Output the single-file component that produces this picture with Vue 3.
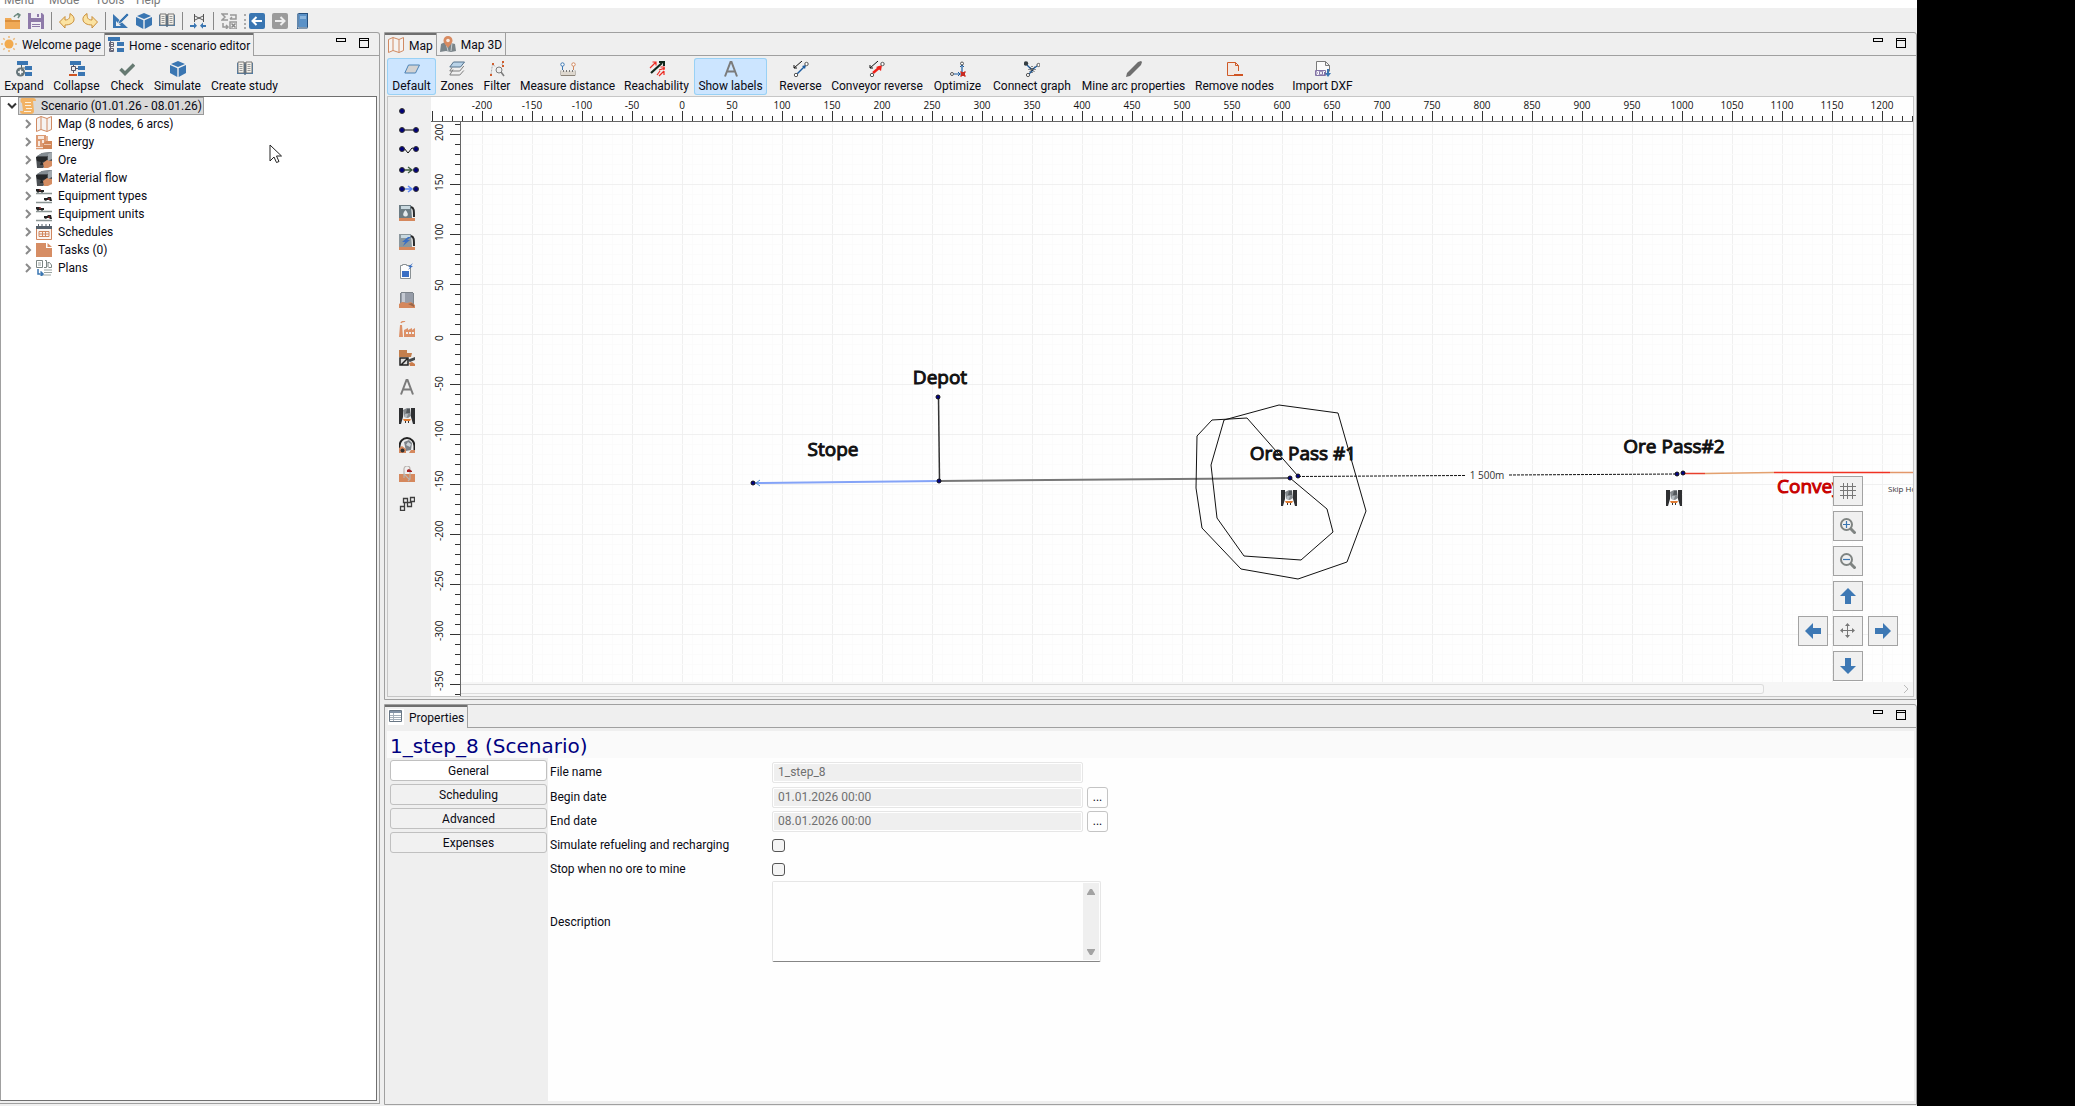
<script setup>
import { ref } from 'vue'

const book = '<path d="M0 2h7l1 1 1-1h7v11H9l-1 1-1-1H0z" fill="#457fb5"/><path d="M1 1h6v11H1zM9 1h6v11H9z" fill="#f4f1ea" stroke="#777"/><path d="M8 1v13" stroke="#666"/><path d="M2.500 3.500h3M2.500 5.500h3M2.500 7.500h3M2.500 9.500h3M10.500 3.500h3M10.500 5.500h3M10.500 7.500h3M10.500 9.500h3" stroke="#999"/>'
const cube = '<path d="M8 0l7 3-7 3-7-3z" fill="#3a76b2"/><path d="M0 4l7.300 3.200V16L0 12zM16 4L8.700 7.200V16l7.300-4z" fill="#3a76b2"/>'
const map = '<path d="M.5 2.500L5 .5l6 2 4.500-2v13L11 15.500l-6-2-4.500 2zM5 .5v13M11 2.500v13" fill="#f6f3f1" stroke="#d08a63"/>'
const oreLump = '<path d="M0 5l6-4 10-1v9L7 16H1z" fill="#4b4f53"/><path d="M6 1l10-1-4 4H1z" fill="#848c92"/><path d="M0 5l11 0v4l-5 1 2 3H4l1-3-4-1z" fill="#26282a"/><path d="M7 11l4-3 5 1v5l-4 2H8z" fill="#d58d62"/><path d="M12 2l4-2v7l-4 2z" fill="#a2a9ae"/>'
const trucks = '<path d="M0 5.500h16M0 14.500h16" stroke="#8b9594" stroke-width="1.500"/><path d="M0 1h4l1 1h3v2H7L6 5 5 4H3L2 5 0 3zM8 10h3l1-1h3l1 4h-2l-1-1h-2l-1 1-2-1z" fill="#222"/><path d="M3 2h2M12 11h2" stroke="#b33"/>'
const shaft = '<path d="M0 0h4v9l-2 7H0zM12 0h4v16h-2l-2-7z" fill="#2e2f31"/><path d="M4 2l4-2h3l1 8-3 2-4-1z" fill="#84898d"/><path d="M8 1h3v4H7z" fill="#54595d"/><path d="M6 6h3l-1 3H5z" fill="#b4bbc0"/><path d="M4 11h8l-1 2H5z" fill="#e07b32"/><path d="M6 13h1v2H6zM9 13h1v2H9z" fill="#333"/>'
const letterA = '<path d="M2 15.500L7.500 1h1L14 15.500M4.500 10.500h7" fill="none" stroke="#7b7b7b" stroke-width="2"/>'
const dots = '<circle cx="3" cy="8" r="2.500" fill="#00007c" stroke="#333"/><circle cx="17" cy="8" r="2.500" fill="#00007c" stroke="#333"/>'

const icons = {
  open: '<path d="M0 5h6l1 2h8v9H0z" fill="#f0aa57"/><path d="M0 7h15v2H0z" fill="#d98f3e"/><path d="M9 4c1-2 3-3 5-2M12 0l3 2-2 3" fill="none" stroke="#6d8a80" stroke-width="1.500"/>',
  save: '<path d="M0 0h14l2 2v14H0z" fill="#8e7aa9"/><path d="M3 0h10v5H3zM3 9h10v7H3z" fill="#efedf3"/><path d="M9 1h2v3H9zM4 11h8v1H4zM4 13h8v1H4z" fill="#8e7aa9"/>',
  undo: '<path d="M.5 9L6 3.500V7c4 0 5-2 5-6.500 3 2 4.500 4 4 6.500-.5 3-4 5-9 5v3z" fill="#fbe3a2" stroke="#c98f3b"/>',
  redo: '<path d="M15.500 9L10 3.500V7C6 7 5 5 5 .5 2 2.500.5 4.500 1 7c.5 3 4 5 9 5v3z" fill="#fbe3a2" stroke="#c98f3b"/>',
  design: '<path d="M0 1l15 14H0zM3 8v5h5z" fill="#3a76b2" fill-rule="evenodd"/><path d="M5 11l1-3 8-8 2 2-8 8z" fill="#3a76b2" stroke="#efefef" stroke-width=".7"/>',
  cube, book,
  arcs: '<path d="M4.500 1v8M13.500 1v8M5 3l8 4M5 7l8-4" stroke="#555" fill="none"/><path d="M0 12h4V9.500l3 3.200-3 3V14H0zM16 12h-3V9.500l-3 3.200 3 3V14h3z" fill="#3a76b2"/>',
  sigma: '<path d="M7 1H1l3 3-3 3h6M9 2h6v4H9M2 10v4h5M5 12l2 2-2 2M11 4L9 6M9 9h7v7H9z" fill="none" stroke="#989898" stroke-width="1.500"/><path d="M10.500 10.500l4 4M14.500 10.500l-4 4" stroke="#888" stroke-width="1.500"/>',
  back: '<rect width="16" height="16" rx="2" fill="#3a76b2"/><path d="M13 8H4M7.500 4L3.500 8l4 4" fill="none" stroke="#fff" stroke-width="2"/>',
  forward: '<rect width="16" height="16" rx="2" fill="#9b9b9b"/><path d="M3 8h9M8.500 4l4 4-4 4" fill="none" stroke="#eee" stroke-width="2"/>',
  manual: '<path d="M2 1l2-1h9v14l-1 2H2z" fill="#27507d"/><path d="M4 1h8v13H4z" fill="#5a91c7"/><path d="M5 3h6v3H5z" fill="#8bb5dd"/><path d="M3 1v14" stroke="#9fc0e0"/><path d="M3 15h9" stroke="#ddd"/>',
  sun: '<circle cx="8" cy="8" r="4.500" fill="#f2aa4e"/><path d="M8 0v2M8 14v2M0 8h2M14 8h2M2.300 2.300l1.400 1.400M12.300 12.300l1.400 1.400M13.700 2.300l-1.400 1.400M3.700 12.300l-1.400 1.400" stroke="#edb877" stroke-width="1.500"/>',
  home: '<path d="M0 0h12v4H0zM9 5h7v4H9zM9 11h7v4H9z" fill="#3a76b2"/><path d="M2.500 4v9.500H6M2.500 7.500H6M1.500 5.500h4v4h-4zM1.500 11.500h4v3h-4z" fill="#efefef" stroke="#667"/>',
  expand: '<path d="M1 0h11v4H1zM9 5h7v4H9zM9 11h7v4H9z" fill="#3a76b2"/><path d="M5.500 4v3H9" fill="none" stroke="#566"/><circle cx="4.500" cy="11" r="4.500" fill="#66757a"/><path d="M4.500 8.500v5M2 11h5" stroke="#fff" stroke-width="1.500"/>',
  collapse: '<path d="M1 0h11v4H1zM9 5h7v4H9zM9 11h7v4H9z" fill="#3a76b2"/><path d="M2.500 5.500h4v4h-4zM4.500 4v2M6.500 7.500H9M4.500 9v3" fill="none" stroke="#556"/><path d="M0 13h8v2H0z" fill="#cf5423"/>',
  check: '<path d="M1.500 8L6 12.500 15 3.500" fill="none" stroke="#667a72" stroke-width="3.500"/>',
  map,
  map3d: '<path d="M1 8l4-2 6 1 4 1 1 7-5 1-5-1-6 1z" fill="#7b858a"/><path d="M6 7l2 8M12 7l-1 8" stroke="#c9cfd2"/><path d="M8 12C5 8 3.500 6.500 3.500 4.500a4.500 4.500 0 019 0C12.500 6.500 11 8 8 12z" fill="#d88a60"/><circle cx="8" cy="4.500" r="1.800" fill="#f4ece7"/>',
  table: '<path d="M.5.500h12v11H.5z" fill="#fff" stroke="#687684"/><path d="M1 1h11v2H1z" fill="#8292a5"/><path d="M4.500 3v8M1 5.500h11M1 7.500h11M1 9.500h11" stroke="#a6b0ba"/>',
  plane: '<path d="M4.500 4h11l-4 8H.8z" fill="#d2d2d2" stroke="#4c83b5"/>',
  zones: '<path d="M4 8.500L.8 14h10l4-4.500M3 6.500L.8 10h10l4-5" fill="none" stroke="#7d7d7d"/><path d="M4.500 1h11l-4 5H.8z" fill="#b9d3e8" stroke="#54728c"/>',
  filter: '<path d="M2 13.500L3.500 3l3 3M13 4l1-3" fill="none" stroke="#aaa" stroke-dasharray="2 1"/><circle cx="10" cy="9" r="3" fill="none" stroke="#7c7c7c"/><path d="M12 11l3 4" stroke="#7c7c7c" stroke-width="1.500"/><path d="M3 2h2v2H3zM13 0h2v2h-2zM13 4h2v2h-2zM1 13h2v2H1z" fill="#cf5d2e"/>',
  measure: '<path d="M1 14.500h14V9.500M1 14.500V9.500" fill="none" stroke="#8b8378"/><path d="M1 10h14v4H1z" fill="#ddd7ce"/><path d="M3.500 9v2M6.500 9v2M9.500 9v2M12.500 9v2" stroke="#777"/><path d="M2.500 9V4" stroke="#3a76b2"/><circle cx="2.500" cy="3.500" r="1.700" fill="#fff" stroke="#3a76b2"/><path d="M13.500 9V4" stroke="#d0875d"/><circle cx="13.500" cy="3.500" r="1.700" fill="#fff" stroke="#d0875d"/>',
  reach: '<path d="M1 7l6-6M3.500 1H7v3.500M8 14l3-4M10 9l6-2M10 15l5-5M11.500 6H15v3M15 10v4" fill="none" stroke="#ec2b22" stroke-width="1.200"/><path d="M2 12L13 2M10 1h5v4" fill="none" stroke="#10261a" stroke-width="2.200"/>',
  letterA,
  reverse: '<path d="M1 7l8-7M1 4v3h3" fill="none" stroke="#111"/><path d="M4 13l8-8" stroke="#1c5ca0" stroke-width="1.500"/><path d="M13 4l-1 4-3-3z" fill="#1c5ca0"/><circle cx="3" cy="14" r="1.700" fill="#fff" stroke="#555"/><circle cx="13.500" cy="3" r="1.700" fill="#fff" stroke="#555"/>',
  conveyor: '<path d="M1 7l8-7M1 4v3h3" fill="none" stroke="#111"/><path d="M4 12l7-6" stroke="#ef2019" stroke-width="2.500"/><path d="M13 4l-1 6-5-4z" fill="#ef2019"/><circle cx="3" cy="14" r="1.700" fill="#fff" stroke="#555"/><circle cx="13.500" cy="3" r="1.700" fill="#fff" stroke="#555"/>',
  optimize: '<path d="M4 13h7M12 4v8" stroke="#1c5ca0" stroke-width="1.200"/><path d="M10 6l2-2 2 2M8 11l2 2-2 2" fill="none" stroke="#1c5ca0"/><path d="M10.500 10.500l5 5M15.500 10.500l-5 5" stroke="#c92b22" stroke-width="1.500"/><path d="M11 11h4v4h-4z" fill="#c92b22"/><circle cx="2" cy="13" r="1.500" fill="#fff" stroke="#555"/><circle cx="12" cy="2.500" r="1.500" fill="#fff" stroke="#555"/>',
  graph: '<path d="M3 4l4 4M13 5L9 8M9 9l-4 4" stroke="#1c5ca0" stroke-width="1.300"/><path d="M8 5v7M4.500 8.500h7M5.500 6l5 5M10.500 6l-5 5" stroke="#222" stroke-dasharray="1 1"/><circle cx="2" cy="2.500" r="2.200" fill="#343d42"/><circle cx="14.500" cy="4" r="1.600" fill="#fff" stroke="#555"/><circle cx="4" cy="14" r="1.600" fill="#fff" stroke="#555"/>',
  pencil: '<path d="M0 16l1-4L12 1l3-1 1 1-1 3L4 15z" fill="#6f6f6f"/>',
  remove: '<path d="M11.500 10V4.500L8.500 1.500h-8v13h7M8.500 1.500v3h3" fill="#f2e9e4" stroke="#cf5a27"/><path d="M7 13h9v2H7z" fill="#cf5423"/>',
  dxf: '<path d="M1.500 9V.5h9l4 4v6M10.500.5v4h4" fill="#fbfbfb" stroke="#7a7a7a"/><rect y="9" width="11" height="6" rx="1" fill="#8272a5"/><path d="M2 10.500h1.500v3H2zM5 10.500l2 3M7 10.500l-2 3M8.500 13.500v-3H10" fill="none" stroke="#fff"/><path d="M12 8h2v4h2l-3 4-3-4h2z" fill="#3a76b2"/>',
  scroll: '<path d="M2 0h11c2 0 3 1 3 3h-3l1 10c0 2-1 3-3 3H3c-2 0-3-1-3-3h3L2 5C0 5 0 0 2 0z" fill="#f2b263"/><path d="M5 4.500h6M5 7.500h6M6 10.500h6M4 13.500h7" stroke="#fdf1dc"/>',
  energy: '<path d="M0 1h10v12H0z" fill="#dc9a73"/><path d="M2 2h6v3H2zM2 7h2v5H2zM6 6h2v3H6z" fill="#f7e9e0"/><path d="M11 2v7M0 14.500h8" stroke="#dc9a73" stroke-width="1.500"/><path d="M7 10l3-3h6v8H7z" fill="#d18657"/><path d="M8 10h7v1H8z" fill="#efc5ad"/>',
  oreLump, trucks,
  calendar: '<path d="M.5 4.500h15v11H.5z" fill="#faf5f2" stroke="#d0865e"/><path d="M0 2h16v3H0z" fill="#55606a"/><path d="M2.500 0v3M6 0v3M10 0v3M13.500 0v3" stroke="#55606a"/><path d="M3 7.500h10v5H3zM6.500 7.500v5M9.500 7.500v5M3 10h10" fill="none" stroke="#d0865e"/>',
  task: '<path d="M0 1h10v5h6v9H0zM11.500 1L16 5h-4.500z" fill="#d68d64"/>',
  plans: '<path d="M.5.500h6v7h-6zM9 .5h1.500v7H8M12 2v5M12 2.500h1.500l2 2.500v2.500h-3" fill="none" stroke="#7b8583"/><path d="M2 3h3M2 5h3M8 10h8M8 12.500h8M6 15h9" stroke="#9aa4a1"/><path d="M2 9v5h4M4.500 11.500L7 14l-2.500 2.500" fill="none" stroke="#3a76b2" stroke-width="1.500"/>',
  pump: '<path d="M0 0h12l1 13H0z" fill="#6c7c84"/><path d="M2 1h9v3H2z" fill="#c8d8df"/><path d="M6.500 5c4 4.500 2 6.500 0 6.500s-4-2 0-6.500z" fill="#e4ebee"/><path d="M12 2c3 1 3 3 3 10" fill="none" stroke="#26282a" stroke-width="2"/><path d="M0 13h16v3H0z" fill="#d5885d"/>',
  charge: '<path d="M0 0h12l1 13H0z" fill="#8b979d"/><path d="M2 1h9v3H2z" fill="#c8d8df"/><path d="M9 3L3 8h3l-2 4 7-6H8l4-3z" fill="#3a6fc4"/><path d="M12 2c3 1 3 3 3 10" fill="none" stroke="#26282a" stroke-width="2"/><path d="M0 13h16v3H0z" fill="#d5885d"/>',
  battery: '<path d="M1.500 2.500h2v-1h4v1h4v13h-10z" fill="#fdfdfd" stroke="#8a9194"/><path d="M3 8h7v6H3z" fill="#3a6fc4"/><path d="M14 0L9 4h2l-2 3 5-4h-2z" fill="#3a6fc4"/>',
  tank: '<path d="M2 0h12v12H2z" fill="#969ca8"/><path d="M3 1h3v9H3z" fill="#c4c9d2"/><path d="M1.500 1v12M14.500 1v12M2 .5h12" stroke="#7c838a"/><path d="M0 16v-4l3-2 5 1 4-1 4 3v3z" fill="#d5885d"/><path d="M9 12l4-1 2 2v2z" fill="#9a6648"/>',
  factory: '<path d="M1 4h2l1 12H0zM5 9l4-2v2l4-2v2l3-2v9H5z" fill="#dc9067"/><path d="M2 2c1-2 2-1 4-2" fill="none" stroke="#dc9067" stroke-width="1.500"/><path d="M7 11h2v2H7zM10 11h2v2h-2zM13 11h2v2h-2z" fill="#efefef"/>',
  dump: '<path d="M0 0h8v3h5l-1 4H0z" fill="#c37f4e"/><path d="M1 8h8v7H1zM2 15l6-6" fill="#ddd" stroke="#222" stroke-width="1.500"/><path d="M8 10l8-3v3l-5 2z" fill="#44484b"/><path d="M10 13l3-1 3 2v2h-5z" fill="#cb7d4d"/>',
  shaft,
  tunnel: '<path d="M.5 14V9a7.500 8 0 0115 0v7" fill="#eee" stroke="#222" stroke-width="2"/><path d="M5 5l5-2 3 3-1 7-5 1z" fill="#7d8389"/><path d="M9 5l3 2-1 3-4-2z" fill="#cfd4d8"/><path d="M0 11l3-2 4 3v4H0zM12 13h4v3h-6z" fill="#d5885d"/><circle cx="3.500" cy="13.500" r="2" fill="#333"/>',
  hoist: '<path d="M0 8h16v8H0z" fill="#d5885d"/><path d="M5 12V3a3 3 0 016 0v10l-2 2M5 8l6 6" fill="none" stroke="#b9b2ae" stroke-width="1.200"/><path d="M8 4l2-1 3 2v1H8z" fill="#a31e1e"/>',
  stairs: '<path d="M1.500 11.500h4v4h-4zM4.500 3.500h4v4h-4zM8.500 7.500h4v4h-4zM11.500 2.500h4v4h-4zM5.500 7v4" fill="#efefef" stroke="#3e3e3e" stroke-width="1.300"/>',
  gridIcon: '<path d="M3.500 0v16M7.500 0v16M12.500 0v16M0 3.500h16M0 7.500h16M0 12.500h16" stroke="#777"/>',
  zoomIn: '<circle cx="6.500" cy="6.500" r="5.500" fill="none" stroke="#7f8482" stroke-width="2"/><path d="M10.500 10.500l5 5" stroke="#7f8482" stroke-width="3"/><path d="M6.500 3v7M3 6.500h7" stroke="#3a76b2" stroke-width="1.200"/>',
  zoomOut: '<circle cx="6.500" cy="6.500" r="5.500" fill="none" stroke="#7f8482" stroke-width="2"/><path d="M10.500 10.500l5 5" stroke="#7f8482" stroke-width="3"/><path d="M3 6.500h7" stroke="#3a76b2" stroke-width="1.200"/>',
  up: '<path d="M8 0l8 8h-5v8H5V8H0z" fill="#3d78b4"/>',
  down: '<path d="M8 16l8-8h-5V0H5v8H0z" fill="#3d78b4"/>',
  left: '<path d="M0 8l8-8v5h8v6H8v5z" fill="#3d78b4"/>',
  right: '<path d="M16 8L8 0v5H0v6h8v5z" fill="#3d78b4"/>',
  move: '<path d="M7.500 2v11M2 7.500h11" stroke="#777"/><path d="M7.500 0L10 3H5zM7.500 15L10 12H5zM0 7.500L3 5v5zM15 7.500L12 5v5z" fill="#777"/>'
}

const menus = [
  { text: 'Menu', width: 45 }, { text: 'Mode', width: 46 },
  { text: 'Tools', width: 41 }, { text: 'Help', width: 40 }
]

const mainTools = [
  ['open', 'Open'], ['save', 'Save'], null, ['undo', 'Undo'], ['redo', 'Redo'], null,
  ['design', 'Design'], ['cube', 'Simulate'], ['book', 'Study'], null, ['arcs', 'Arcs'], null,
  ['sigma', 'Formula'], 'dots', ['back', 'Back'], ['forward', 'Forward'], ['manual', 'Manual']
]

const sideTools = [
  { text: 'Expand', icon: 'expand', width: 48 },
  { text: 'Collapse', icon: 'collapse', width: 57 },
  { text: 'Check', icon: 'check', width: 44 },
  { text: 'Simulate', icon: 'cube', width: 57 },
  { text: 'Create study', icon: 'book', width: 77 }
]

const tree = [
  { text: 'Map (8 nodes, 6 arcs)', icon: 'map' },
  { text: 'Energy', icon: 'energy' },
  { text: 'Ore', icon: 'oreLump' },
  { text: 'Material flow', icon: 'oreLump' },
  { text: 'Equipment types', icon: 'trucks' },
  { text: 'Equipment units', icon: 'trucks' },
  { text: 'Schedules', icon: 'calendar' },
  { text: 'Tasks (0)', icon: 'task' },
  { text: 'Plans', icon: 'plans' }
]

const mapTools = [
  [
    { text: 'Default', icon: 'plane', width: 49, on: true },
    { text: 'Zones', icon: 'zones', width: 42 },
    { text: 'Filter', icon: 'filter', width: 38 },
    { text: 'Measure distance', icon: 'measure', width: 103 },
    { text: 'Reachability', icon: 'reach', width: 75 },
    { text: 'Show labels', icon: 'letterA', width: 73, on: true }
  ],
  [
    { text: 'Reverse', icon: 'reverse', width: 51 },
    { text: 'Conveyor reverse', icon: 'conveyor', width: 102 },
    { text: 'Optimize', icon: 'optimize', width: 59 },
    { text: 'Connect graph', icon: 'graph', width: 90 },
    { text: 'Mine arc properties', icon: 'pencil', width: 113 },
    { text: 'Remove nodes', icon: 'remove', width: 89 }
  ],
  [{ text: 'Import DXF', icon: 'dxf', width: 71 }]
]

const arcTools = [
  [
    ['Node', '<circle cx="3" cy="8" r="2.500" fill="#00007c" stroke="#333"/>'],
    ['Arc', '<path d="M3 8h14" stroke="#555" stroke-width="1.500"/>' + dots],
    ['Polyline', '<path d="M3 8l2-1 4 5 4-5 4 1" fill="none" stroke="#111"/>' + dots]
  ],
  [
    ['One-way arc', '<path d="M3 8h9M9 5l4 3-4 3" fill="none" stroke="#3d5a3d" stroke-width="1.300"/>' + dots],
    ['Haul arc', '<path d="M3 8h9M9 5l4 3-4 3" fill="none" stroke="#5c86f2" stroke-width="1.500"/>' + dots]
  ]
]
const objectTools = [
  ['Fuel station', 'pump'], ['Charging station', 'charge'], ['Battery swap', 'battery'],
  ['Bunker', 'tank'], ['Plant', 'factory'], ['Dump', 'dump'], ['Label', 'letterA'],
  ['Ore pass', 'shaft'], ['Stope', 'tunnel'], ['Skip hoist', 'hoist'], ['Conveyor', 'stairs']
]

// Map scale is one pixel per metre; the canvas origin is its top left corner.
const originX = 221
const originY = 212
const steps = (from, to, step) =>
  Array.from({ length: Math.floor((to - from) / step) + 1 }, (_, i) => from + i * step)
const xTicks = steps(-250, 1230, 10)
const yTicks = steps(-360, 210, 10)
const xLabels = steps(-200, 1200, 50)
const yLabels = steps(-350, 200, 50)

const nodes = [[292, 361], [477, 275], [478, 359], [829, 356], [837, 354], [1216, 352], [1222, 351]]
const spiral = '837,354 786,296 751,298 736,314 735,366 741,406 780,447 837,457 886,440 905,389 877,291 818,283 763,298 750,343 756,396 783,434 840,438 872,410 866,387 829,356'

const navButtons = [
  ['gridIcon', 'Grid', 'col-mid'], ['zoomIn', 'Zoom in', 'col-mid'], ['zoomOut', 'Zoom out', 'col-mid'],
  ['up', 'Up', 'col-mid'], ['left', 'Left', 'col-first'], ['move', 'Center', 'col-mid'], ['right', 'Right', 'col-last'],
  ['down', 'Down', 'col-mid']
]

const sections = ['General', 'Scheduling', 'Advanced', 'Expenses']
const section = ref('General')
const refuel = ref(false)
const stopEmpty = ref(false)
const description = ref('')
</script>

<template>
  <div class="screen">
    <div class="window">
      <nav class="menubar">
        <a v-for="m in menus" :key="m.text" href="#" :style="{ width: m.width + 'px' }">{{ m.text }}</a>
      </nav>
      <div class="maintools">
        <template v-for="(t, i) in mainTools" :key="i">
          <span v-if="t === null" class="sep"></span>
          <span v-else-if="t === 'dots'" class="dots"></span>
          <button v-else class="tool" :aria-label="t[1]">
            <svg width="16" height="16" viewBox="0 0 16 16" v-html="icons[t[0]]"></svg>
          </button>
        </template>
      </div>

      <div class="workbench">
        <aside class="folder side">
          <div class="tabs">
            <button class="tab welcome">
              <svg width="16" height="16" viewBox="0 0 16 16" v-html="icons.sun"></svg>Welcome page
            </button>
            <button class="tab active">
              <svg width="16" height="16" viewBox="0 0 16 16" v-html="icons.home"></svg>Home - scenario editor
            </button>
            <span class="winbtns">
              <button class="min" aria-label="Minimize"></button>
              <button class="max" aria-label="Maximize"></button>
            </span>
          </div>
          <div class="viewtools">
            <button v-for="t in sideTools" :key="t.text" class="viewtool" :style="{ width: t.width + 'px' }">
              <svg width="16" height="16" viewBox="0 0 16 16" v-html="icons[t.icon]"></svg>{{ t.text }}
            </button>
          </div>
          <div class="tree">
            <div class="row root">
              <svg class="chev" width="10" height="8" viewBox="0 0 10 8"><path d="M1 1.500l4 4 4-4" fill="none" stroke="#333" stroke-width="2" /></svg>
              <span class="picked">
                <svg width="16" height="16" viewBox="0 0 16 16" v-html="icons.scroll"></svg>Scenario (01.01.26 - 08.01.26)
              </span>
            </div>
            <div v-for="r in tree" :key="r.text" class="row child">
              <svg class="chev" width="7" height="10" viewBox="0 0 7 10"><path d="M1 1l4 4-4 4" fill="none" stroke="#8a8a8a" stroke-width="2" /></svg>
              <svg class="pic" width="16" height="16" viewBox="0 0 16 16" v-html="icons[r.icon]"></svg>{{ r.text }}
            </div>
            <svg class="cursor" width="13" height="20" viewBox="0 0 13 20"><path d="M1 1v16l4-4 2.500 5.500 2.500-1-2.500-5.500h5z" fill="#fff" stroke="#222" /></svg>
          </div>
        </aside>

        <main class="right">
          <section class="folder editor">
            <div class="tabs">
              <button class="tab active">
                <svg width="16" height="16" viewBox="0 0 16 16" v-html="icons.map"></svg>Map
              </button>
              <button class="tab">
                <svg width="16" height="16" viewBox="0 0 16 16" v-html="icons.map3d"></svg>Map 3D
              </button>
              <span class="winbtns">
                <button class="min" aria-label="Minimize"></button>
                <button class="max" aria-label="Maximize"></button>
              </span>
            </div>
            <div class="viewtools">
              <div v-for="(g, gi) in mapTools" :key="gi" class="group">
                <button v-for="t in g" :key="t.text" class="viewtool" :class="{ on: t.on }" :style="{ width: t.width + 'px' }">
                  <svg width="16" height="16" viewBox="0 0 16 16" v-html="icons[t.icon]"></svg>{{ t.text }}
                </button>
              </div>
            </div>
            <div class="mapbox">
              <div class="palette">
                <div v-for="(g, gi) in arcTools" :key="gi" class="arcs">
                  <button v-for="a in g" :key="a[0]" :aria-label="a[0]">
                    <svg width="20" height="16" viewBox="0 0 20 16" v-html="a[1]"></svg>
                  </button>
                </div>
                <button v-for="o in objectTools" :key="o[0]" class="object" :aria-label="o[0]">
                  <svg width="16" height="16" viewBox="0 0 16 16" v-html="icons[o[1]]"></svg>
                </button>
              </div>
              <div class="plot">
                <svg class="ruler-x">
                  <g :transform="`translate(${originX + 30} 0)`">
                    <path v-for="v in xTicks" :key="v" :d="`M${v + .5} ${v % 50 ? 19 : 14}V24`" class="tick" />
                    <text v-for="v in xLabels" :key="v" :x="v" y="12" text-anchor="middle">{{ v }}</text>
                  </g>
                  <path d="M0 24.500H4000" class="axis" />
                </svg>
                <div class="lower">
                  <svg class="ruler-y">
                    <g :transform="`translate(0 ${originY})`">
                      <path v-for="v in yTicks" :key="v" :d="`M${v % 50 ? 24 : 19} ${.5 - v}H30`" class="tick" />
                      <text v-for="v in yLabels" :key="v" :transform="`translate(12 ${7 - v}) rotate(-90)`">{{ v }}</text>
                    </g>
                    <path d="M29.500 0V3000" class="axis" />
                  </svg>
                  <div class="canvas">
                    <svg class="sheet">
                      <path v-for="v in xTicks" :key="'x' + v" :d="`M${v + originX + .5} 0V3000`" :class="v % 50 ? 'minor' : 'major'" />
                      <path v-for="v in yTicks" :key="'y' + v" :d="`M0 ${originY - v + .5}H4000`" :class="v % 50 ? 'minor' : 'major'" />
                      <path d="M294 361L478 359" stroke="#84a3f7" stroke-width="2" />
                      <path d="M299 358l-4 3 4 3" fill="none" stroke="#4a8fd0" />
                      <path d="M477.500 275L478.500 359" stroke="#333" stroke-width="1.500" />
                      <path d="M478 359L829 356" stroke="#777" stroke-width="2" />
                      <path d="M837 354.500L1004 353.500M1048 353L1216 352" stroke="#111" stroke-dasharray="3 1" />
                      <polyline :points="spiral" fill="none" stroke="#111" />
                      <path d="M1222 351.500H1244" stroke="#e8402c" stroke-width="1.500" />
                      <path d="M1244 351.500L1313 350.500" stroke="#e3a06e" stroke-width="1.500" />
                      <path d="M1313 350.500H1429" stroke="#f03222" stroke-width="1.500" />
                      <path d="M1429 350.500H4000" stroke="#e3976a" stroke-width="1.500" />
                      <circle v-for="n in nodes" :key="n.join()" :cx="n[0]" :cy="n[1]" r="2" class="node" />
                      <text class="name" x="479" y="262" text-anchor="middle">Depot</text>
                      <text class="name" x="372" y="334" text-anchor="middle">Stope</text>
                      <text class="name" x="842" y="338" text-anchor="middle">Ore Pass #1</text>
                      <text class="name" x="1213" y="331" text-anchor="middle">Ore Pass#2</text>
                      <text class="name red" x="1316" y="371">Conveyor</text>
                      <text class="note" x="1026" y="357" text-anchor="middle">1 500m</text>
                      <text class="note small" x="1427" y="370">Skip Hoist</text>
                      <svg x="820" y="368" width="16" height="16" viewBox="0 0 16 16" v-html="icons.shaft"></svg>
                      <svg x="1205" y="368" width="16" height="16" viewBox="0 0 16 16" v-html="icons.shaft"></svg>
                    </svg>
                    <div class="hscroll"><span class="thumb"></span><svg width="6" height="8" viewBox="0 0 6 8"><path d="M1 0l4 4-4 4" fill="none" stroke="#bbb" /></svg></div>
                    <div class="navpad">
                      <button v-for="b in navButtons" :key="b[0]" :class="b[2]" :aria-label="b[1]">
                        <svg width="16" height="16" viewBox="0 0 16 16" v-html="icons[b[0]]"></svg>
                      </button>
                    </div>
                  </div>
                </div>
              </div>
            </div>
          </section>

          <section class="folder props">
            <div class="tabs">
              <button class="tab active">
                <svg class="paper" width="16" height="16" viewBox="-1 -1 16 16" v-html="icons.table"></svg>Properties
              </button>
              <span class="winbtns">
                <button class="min" aria-label="Minimize"></button>
                <button class="max" aria-label="Maximize"></button>
              </span>
            </div>
            <h1>1_step_8 (Scenario)</h1>
            <div class="body">
              <div class="sections">
                <button v-for="s in sections" :key="s" :class="{ current: s === section }" @click="section = s">{{ s }}</button>
              </div>
              <form class="form" @submit.prevent>
                <label for="file">File name</label>
                <div class="field"><input id="file" class="text" type="text" value="1_step_8" disabled></div>
                <label for="begin">Begin date</label>
                <div class="field"><input id="begin" class="text" type="text" value="01.01.2026 00:00" disabled><button type="button" class="more">...</button></div>
                <label for="end">End date</label>
                <div class="field"><input id="end" class="text" type="text" value="08.01.2026 00:00" disabled><button type="button" class="more">...</button></div>
                <label for="refuel">Simulate refueling and recharging</label>
                <div class="field"><input id="refuel" v-model="refuel" type="checkbox"></div>
                <label for="stop">Stop when no ore to mine</label>
                <div class="field"><input id="stop" v-model="stopEmpty" type="checkbox"></div>
                <label for="desc">Description</label>
                <div class="area">
                  <textarea id="desc" v-model="description"></textarea>
                  <span class="vscroll">
                    <svg width="8" height="6" viewBox="0 0 8 6"><path d="M3 0h2l3 5v1H0V5z" fill="#a3a3a3" /></svg>
                    <svg width="8" height="6" viewBox="0 0 8 6"><path d="M3 6h2l3-5V0H0v1z" fill="#a3a3a3" /></svg>
                  </span>
                </div>
              </form>
            </div>
          </section>
        </main>
      </div>
    </div>
  </div>
</template>

<style>
body { margin: 0; background: #000; }
</style>

<style scoped>
* { box-sizing: border-box; }
button { margin: 0; padding: 0; border: 0; background: none; font: inherit; color: inherit; }
svg { display: block; flex: none; }
.screen {
  min-height: 100vh;
  display: flex;
  padding-right: 158px;
  background: #000;
  color: #0a0a14;
  font: 12px/16px Roboto, "Open Sans", sans-serif;
  white-space: nowrap;
}
.window { flex: 1; min-width: 0; display: flex; flex-direction: column; background: #efefef; }

.menubar { display: flex; align-items: flex-end; height: 8px; padding-left: 4px; overflow: hidden; background: #fff; }
.menubar a { flex: none; color: #7a7a7a; text-decoration: none; }
.maintools { display: flex; align-items: center; height: 24px; padding: 2px 0 0 5px; }
.tool { width: 23px; height: 16px; }
.sep { width: 8px; height: 18px; border-left: 1px solid #888; }
.dots { width: 5px; height: 15px; border-left: 2px dotted #aaa; }

.workbench { flex: 1; display: flex; gap: 4px; min-height: 0; }
.folder { display: flex; flex-direction: column; border: 1px solid #a0a0a0; border-radius: 0 3px 0 0; min-width: 0; }
.side { flex: 0 0 380px; border-left: 0; padding-bottom: 2px; margin-bottom: 2px; }
.right { flex: 1; min-width: 0; display: flex; flex-direction: column; gap: 4px; padding-bottom: 1px; }
.editor { flex: 664 1 0; padding: 0 2px 2px; }
.props { flex: 396 1 0; padding: 0 2px 3px; }

.tabs { display: flex; height: 23px; margin: 0 -2px; border-bottom: 1px solid #a0a0a0; }
.side .tabs { margin: 0; }
.tab { display: flex; align-items: center; gap: 5px; height: 22px; padding: 2px 3px 0; border-right: 1px solid #a0a0a0; }
.tab svg { margin-bottom: 2px; }
.tab.active { height: 23px; background: #efefef; box-shadow: inset 0 2px #6e6e6e; }
.tab.welcome { padding-left: 1px; }
.winbtns { display: flex; gap: 13px; margin-left: auto; padding: 5px 10px 0 0; }
.min { width: 10px; height: 4px; border: 1px solid #000; }
.max { width: 10px; height: 10px; border: 1px solid #000; box-shadow: inset 0 1px #efefef, inset 0 2px #000; }

.viewtools { display: flex; height: 40px; padding-top: 2px; }
.group { display: flex; }
.group + .group { margin-left: 8px; }
.viewtool { display: flex; flex-direction: column; align-items: center; gap: 1px; height: 37px; padding-top: 3px; flex: none; border-radius: 3px; }
.viewtool.on { background: #cce5ff; box-shadow: inset 0 0 0 1px #99d1f5; }

.tree { position: relative; flex: 1; margin-right: 2px; border: 1px solid #6f6f6f; border-left-color: #a0a0a0; background: #fff; overflow: hidden; }
.row { display: flex; align-items: center; height: 18px; }
.root { padding-left: 6px; gap: 1px; }
.picked { display: flex; align-items: center; gap: 5px; height: 18px; padding: 0 1px; border: 1px solid #9a9a9a; background: #d9d9d9; }
.child { padding-left: 24px; }
.child .chev { margin-right: 4px; }
.pic { margin-right: 6px; }
.cursor { position: absolute; left: 268px; top: 47px; }

.mapbox { flex: 1; display: flex; min-height: 0; border: 1px solid #c6c6c6; }
.palette { flex: 0 0 43px; padding: 4px 0 0 11px; }
.palette button { display: flex; align-items: center; height: 19px; }
.arcs + .arcs { padding-top: 2px; }
.palette .object { height: 29px; }
.plot { flex: 1; min-width: 0; display: flex; flex-direction: column; background: #fefefe; font-family: "Open Sans", "Noto Sans", sans-serif; }
.ruler-x { width: 100%; height: 25px; overflow: hidden; }
.lower { flex: 1; display: flex; min-height: 0; }
.ruler-y { width: 30px; height: 100%; overflow: hidden; }
.ruler-x text, .ruler-y text { font-size: 10px; fill: #111; }
.tick { stroke: #333; }
.axis { stroke: #666; }
.canvas { position: relative; flex: 1; min-width: 0; overflow: hidden; }
.sheet { position: absolute; inset: 0; width: 100%; height: 100%; }
.minor { stroke: #fbfbfb; }
.major { stroke: #f0f0f0; }
.node { fill: #00008a; stroke: #111; }
.name { font-size: 19px; fill: #111; stroke: #111; }
.name.red { fill: #c80000; stroke: #c80000; }
.note { font-size: 10px; fill: #333; }
.note.small { font-size: 8px; }
.hscroll { position: absolute; left: 0; right: 0; bottom: 0; display: flex; align-items: center; justify-content: space-between; height: 14px; padding-right: 4px; background: #f6f6f6; }
.thumb { width: 90%; height: 10px; border: 1px solid #dcdcdc; border-left: 0; border-radius: 0 3px 3px 0; background: #f8f8f8; }
.navpad { position: absolute; right: 15px; bottom: 15px; display: grid; grid-template-columns: repeat(3, 30px); grid-auto-rows: 30px; gap: 5px; }
.navpad button { display: flex; align-items: center; justify-content: center; border: 1px solid #a3a3a3; background: #f0f0f0; }
.col-first { grid-column: 1; }
.col-mid { grid-column: 2; }
.col-last { grid-column: 3; }

.paper { background: #fff; }
h1 { margin: 3px 0 0; height: 27px; padding-left: 3px; background: #fafafa; color: #000080; font: 20px/30px "DejaVu Sans", Verdana, sans-serif; }
.body { flex: 1; display: flex; background: #fefefe; }
.sections { flex: 0 0 161px; display: flex; flex-direction: column; gap: 3px; padding: 2px 1px 0 3px; background: #efefef; }
.sections button { height: 21px; border: 1px solid #c0c0c0; border-radius: 3px; background: #f1f1f1; }
.sections .current { background: #fff; }
.form { display: grid; grid-template-columns: 222px auto; grid-template-rows: 26px repeat(4, 24px) 81px; align-content: start; align-items: center; padding: 1px 0 0 2px; }
.field { display: flex; align-items: center; gap: 4px; }
.text { width: 311px; height: 21px; padding: 0 5px; border: 1px solid #e6e6e6; border-radius: 2px; background: #efefef; box-shadow: inset 0 0 0 1px #fff; color: #707070; font: inherit; }
.more { width: 21px; height: 21px; border: 1px solid #c4c4c4; border-radius: 3px; background: #fefefe; }
input[type="checkbox"] { appearance: none; width: 13px; height: 13px; margin: 0; border: 1px solid #555; border-radius: 3px; background: #f4f4f4; }
.area { display: flex; width: 329px; height: 81px; border: 1px solid #e6e6e6; border-bottom-color: #858585; border-radius: 2px; }
textarea { flex: 1; border: 0; outline: 0; resize: none; overflow: hidden; background: #fefefe; font: inherit; }
.vscroll { display: flex; flex-direction: column; justify-content: space-between; align-items: center; width: 16px; margin: 1px 1px 1px 0; padding: 6px 0 5px; background: #efefef; }
</style>
